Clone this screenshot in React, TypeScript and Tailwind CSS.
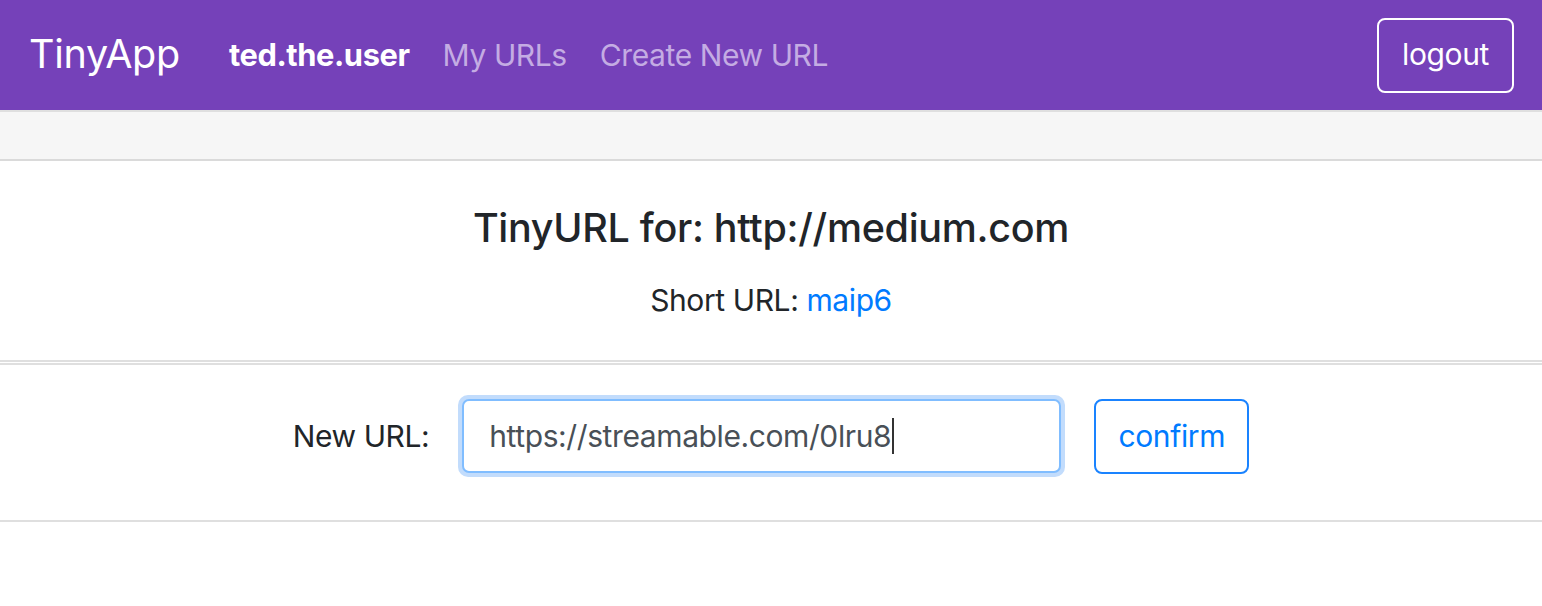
const navLinks = [
    { label: 'ted.the.user', active: true },
    { label: 'My URLs', active: false },
    { label: 'Create New URL', active: false },
]

const App = () => {
    return (
        <div className="min-h-[606px] bg-white font-['Inter','Liberation_Sans',sans-serif] text-[#212529]">
            {/* navbar */}
            <nav className="h-[110px] bg-[#7541b9] flex items-center pl-[29px] pr-[28px]">
                <span className="text-[39.5px] text-white tracking-[-0.3px] mr-[49px]">TinyApp</span>
                <div className="flex items-center gap-[33px] text-[30px] tracking-[-0.4px]">
                    {navLinks.map((link) => (
                        <span
                            key={link.label}
                            className={link.active ? 'text-white font-bold text-[30.8px]' : 'text-[#c4ace3]'}
                        >
                            {link.label}
                        </span>
                    ))}
                </div>
                <button className="ml-auto h-[75px] w-[137px] border-2 border-white rounded-[8px] text-white text-[30px] tracking-[-0.4px] pb-[2px]">
                    logout
                </button>
            </nav>

            {/* url card */}
            <div className="border-y-2 border-[#dfdfdf]">
                <div className="h-[49px] bg-[#f6f6f6] border-b-2 border-[#dadada]" />
                <div className="flex flex-col items-center pt-[43px] pb-[36px]">
                    <h3 className="text-[39.5px] font-medium tracking-[-0.3px] leading-[48px]">
                        TinyURL for: http://medium.com
                    </h3>
                    <p className="mt-[24px] text-[30px] tracking-[-0.4px] leading-[48px]">
                        Short URL: <a className="text-[#007bff]">maip6</a>
                    </p>
                </div>
            </div>

            {/* edit form */}
            <div className="mt-[1px] border-y-2 border-[#dfdfdf] h-[159px] flex justify-center pt-[30px]">
                <div className="flex items-center h-[82px]">
                    <span className="text-[30px] tracking-[-0.4px] mr-[29px]">New URL:</span>
                    <div className="rounded-[10px] bg-[#c2dcfc] p-[4px] mr-[29px]">
                        <div className="w-[599px] h-[74px] bg-white border-2 border-[#80bdff] rounded-[7px] flex items-center pl-[25px] text-[30px] tracking-[-0.4px] text-[#495057]">
                            https://streamable.com/0lru8
                            <span className="inline-block w-[1.5px] h-[36px] bg-[#333] ml-[1px]" />
                        </div>
                    </div>
                    <button className="h-[75px] w-[155px] border-2 border-[#1a83ff] rounded-[8px] text-[#007bff] text-[30px] tracking-[-0.4px]">
                        confirm
                    </button>
                </div>
            </div>
        </div>
    );
};

export default App;
